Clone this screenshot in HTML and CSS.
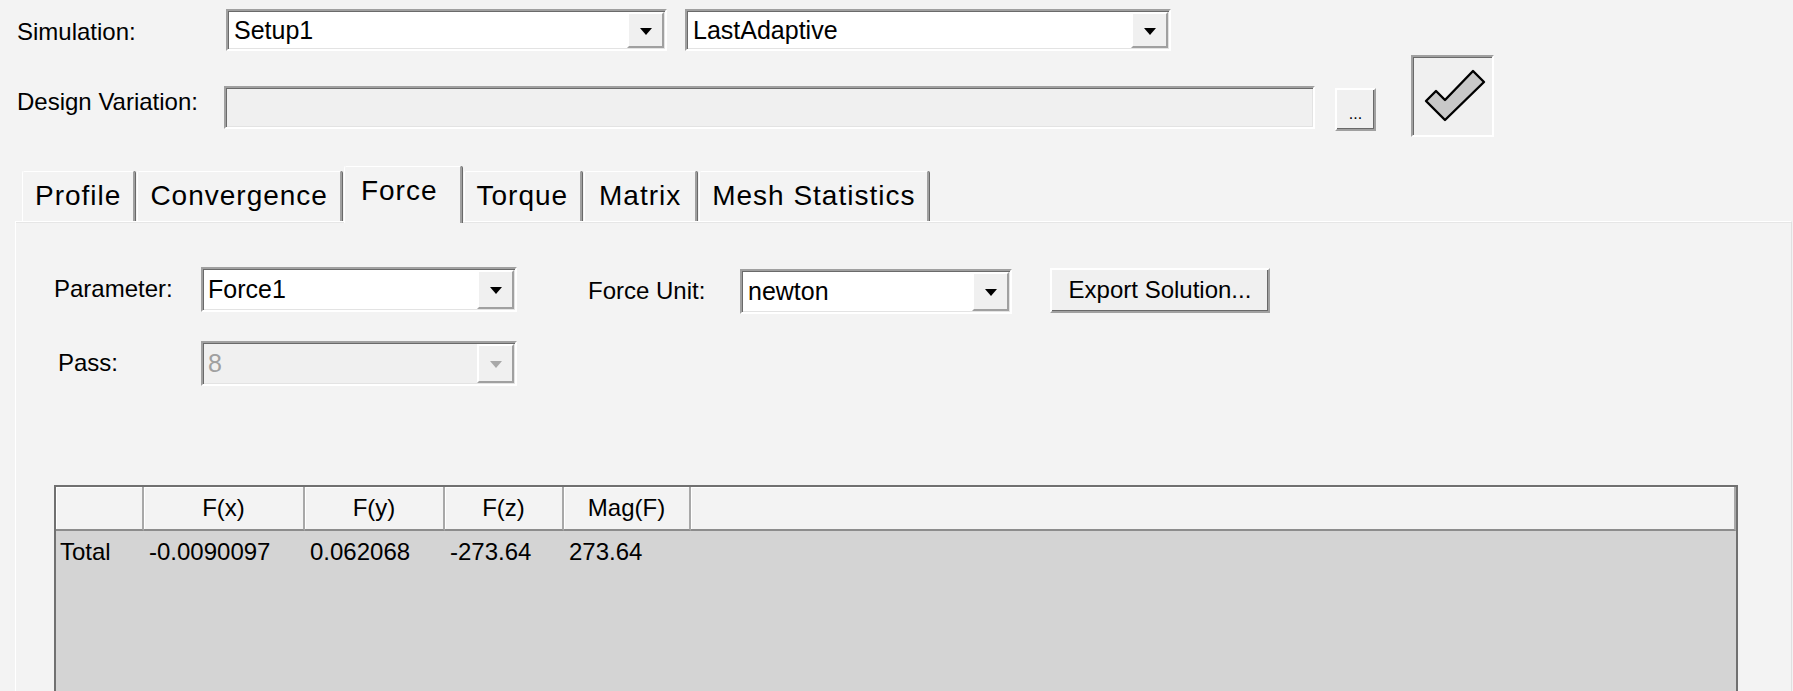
FILE: index.html
```html
<!DOCTYPE html>
<html lang="en">
<head>
    <meta charset="UTF-8">
    <title>Solutions</title>
    <link rel="stylesheet" href="styles.css">
</head>
<body>

<div class="dialog">
    <div class="row row-sim">
        <span class="lbl lbl-sim">Simulation:</span>
        <div class="combo combo-setup">
            <span class="combo-text">Setup1</span>
            <span class="combo-btn"><i class="arrow"></i></span>
        </div>
        <div class="combo combo-adaptive">
            <span class="combo-text">LastAdaptive</span>
            <span class="combo-btn"><i class="arrow"></i></span>
        </div>
    </div>

    <div class="row row-var">
        <span class="lbl lbl-var">Design Variation:</span>
        <div class="textbox"></div>
        <button class="btn btn-dots">...</button>
        <button class="btn btn-check">
            <svg width="62" height="54" viewBox="0 0 62 54">
                <path d="M2 33 L12 23 L21 32 L49 3 L60 14 L21 52 Z" fill="#c8c8c8" stroke="#000" stroke-width="2.4" stroke-linejoin="round"/>
            </svg>
        </button>
    </div>

    <div class="tabs">
        <div class="tab">Profile</div>
        <div class="tab">Convergence</div>
        <div class="tab active">Force</div>
        <div class="tab">Torque</div>
        <div class="tab">Matrix</div>
        <div class="tab">Mesh Statistics</div>
    </div>

    <div class="panel">
        <div class="prow">
            <span class="lbl plbl">Parameter:</span>
            <div class="combo combo-param">
                <span class="combo-text">Force1</span>
                <span class="combo-btn"><i class="arrow"></i></span>
            </div>
            <span class="lbl ulbl">Force Unit:</span>
            <div class="combo combo-unit">
                <span class="combo-text">newton</span>
                <span class="combo-btn"><i class="arrow"></i></span>
            </div>
            <button class="btn btn-export">Export Solution...</button>
        </div>

        <div class="prow prow-pass">
            <span class="lbl plbl pass-lbl">Pass:</span>
            <div class="combo combo-param disabled">
                <span class="combo-text">8</span>
                <span class="combo-btn"><i class="arrow"></i></span>
            </div>
        </div>

        <div class="grid">
            <div class="gh"></div>
            <div class="gh">F(x)</div>
            <div class="gh">F(y)</div>
            <div class="gh">F(z)</div>
            <div class="gh">Mag(F)</div>
            <div class="gh"></div>

            <div class="gc first">Total</div>
            <div class="gc">-0.0090097</div>
            <div class="gc">0.062068</div>
            <div class="gc">-273.64</div>
            <div class="gc">273.64</div>
            <div class="gc"></div>
        </div>
    </div>
</div>

</body>
</html>
```

FILE: styles.css
```css
body {
    margin: 0;
    background-color: #f3f3f3;
    font-family: "Liberation Sans", Arial, sans-serif;
    color: #000;
    overflow: hidden;
}
.dialog {
    padding: 0 1px 0 15px;
}
.row {
    display: flex;
}
.row-sim {
    margin-top: 9px;
    height: 42px;
    align-items: center;
}
.lbl {
    font-size: 24px;
    line-height: 28px;
    white-space: nowrap;
}
.lbl-sim {
    width: 211px;
    padding: 4px 0 0 2px;
    box-sizing: border-box;
}
.lbl-var {
    width: 211px;
    padding-left: 2px;
    box-sizing: border-box;
    align-self: flex-end;
    margin-bottom: 21px;
}

/* combo boxes */
.combo {
    display: flex;
    box-sizing: border-box;
    height: 42px;
    background-color: #fff;
    border: 2px solid;
    border-color: #a0a0a0 #fff #fff #a0a0a0;
    box-shadow: inset 1px 1px #6a6a6a, inset -1px -1px #e3e3e3;
}
.combo-setup {
    width: 441px;
}
.combo-adaptive {
    width: 486px;
    margin-left: 18px;
}
.combo-text {
    flex: 1;
    font-size: 25px;
    line-height: 38px;
    padding-left: 6px;
    white-space: nowrap;
}
.combo-btn {
    width: 37px;
    margin: 1px 1px 1px 0;
    background-color: #f0f0f0;
    box-sizing: border-box;
    border: 2px solid;
    border-color: #fff #a0a0a0 #a0a0a0 #fff;
    display: flex;
    align-items: center;
    justify-content: center;
}
.arrow {
    width: 0;
    height: 0;
    border-left: 6px solid transparent;
    border-right: 6px solid transparent;
    border-top: 7px solid #000;
    margin-top: 2px;
}
.disabled {
    background-color: #f0f0f0;
}
.disabled .combo-text {
    color: #a0a0a0;
}
.disabled .arrow {
    border-top-color: #a8a8a8;
}

/* design variation row */
.row-var {
    margin-top: 4px;
    height: 82px;
    align-items: flex-end;
}
.textbox {
    width: 1091px;
    height: 43px;
    margin-left: -2px;
    margin-bottom: 8px;
    box-sizing: border-box;
    background-color: #f0f0f0;
    border: 2px solid;
    border-color: #a0a0a0 #fff #fff #a0a0a0;
    box-shadow: inset 1px 1px #6a6a6a, inset -1px -1px #e3e3e3;
}
.btn {
    font-family: "Liberation Sans", Arial, sans-serif;
    background-color: #f0f0f0;
    box-sizing: border-box;
    border: 2px solid;
    border-color: #fff #a0a0a0 #a0a0a0 #fff;
    box-shadow: inset -1px -1px #696969;
    padding: 0;
    color: #000;
}
.btn-dots {
    width: 41px;
    height: 43px;
    margin-left: 20px;
    margin-bottom: 6px;
    font-size: 16px;
    line-height: 30px;
    padding-top: 8px;
}
.btn-check {
    width: 83px;
    height: 82px;
    margin-left: 35px;
    border-color: #a0a0a0 #fff #fff #a0a0a0;
    box-shadow: inset 1px 1px #6a6a6a;
    display: flex;
    align-items: center;
    justify-content: center;
    padding: 0 0 2px 4px;
}

/* tabs */
.tabs {
    display: flex;
    align-items: flex-end;
    gap: 2px;
    margin-top: 29px;
    padding-left: 7px;
    height: 55px;
    position: relative;
    z-index: 1;
}
.tab {
    height: 50px;
    min-width: 113px;
    box-sizing: border-box;
    padding: 0 12px;
    font-size: 28px;
    letter-spacing: 1px;
    line-height: 48px;
    text-align: center;
    background-color: #f3f3f3;
    border-left: 1px solid #fff;
    border-top: 1px solid #fff;
    border-right: 2px solid #a0a0a0;
    border-radius: 2px 2px 0 0;
    box-shadow: 1px 0 #696969;
    white-space: nowrap;
}
.tab.active {
    height: 57px;
    margin-bottom: -2px;
    padding: 0 22px 0 16px;
    line-height: 48px;
}

/* panel */
.panel {
    border-top: 1px solid #fff;
    border-left: 1px solid #fff;
    border-right: 1px solid #e0e0e0;
    box-shadow: inset 0 1px #e6e6e6;
    padding: 44px 53px 0 38px;
    height: 600px;
}
.prow {
    display: flex;
    align-items: center;
    height: 46px;
}
.plbl {
    width: 147px;
}
.pass-lbl {
    padding-left: 4px;
    box-sizing: border-box;
}
.combo-param {
    width: 316px;
    height: 45px;
}
.combo-param .combo-text {
    line-height: 41px;
    padding-left: 5px;
}
.ulbl {
    margin-left: 71px;
    width: 152px;
    margin-top: 4px;
}
.combo-unit {
    width: 272px;
    height: 45px;
    margin-top: 4px;
}
.combo-unit .combo-text {
    line-height: 41px;
}
.btn-export {
    margin-left: 38px;
    width: 220px;
    height: 45px;
    margin-top: 2px;
    font-size: 24px;
}
.prow-pass {
    margin-top: 28px;
}

/* result grid */
.grid {
    margin-top: 99px;
    display: grid;
    grid-template-columns: 88px 161px 140px 119px 127px 1fr;
    grid-template-rows: 44px 200px;
    border: 2px solid #707070;
    background-color: #d4d4d4;
}
.gh {
    background-color: #f3f3f3;
    border-bottom: 2px solid #8c8c8c;
    border-right: 2px solid #a8a8a8;
    box-shadow: inset 1px 1px #fff;
    font-size: 24px;
    line-height: 42px;
    text-align: center;
}
.gc {
    font-size: 24px;
    line-height: 30px;
    padding: 6px 0 0 5px;
    white-space: nowrap;
}
.gc.first {
    padding-left: 4px;
}
```
